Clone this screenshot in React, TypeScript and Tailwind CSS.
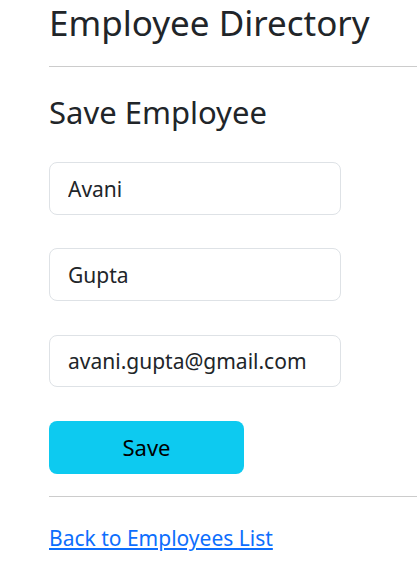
export default function App() {
  return (
    <div className="min-h-[586px] bg-white pl-[49px] font-['Noto_Sans','Open_Sans',sans-serif] text-[#212529]">
      <h1 className="h-[48px] text-[35px] leading-[46px] font-normal">Employee Directory</h1>
      <hr className="mt-[18px] border-0 border-t border-[#cccccc]" />
      <h2 className="mt-[23px] h-[44px] text-[31px] leading-[44px] font-normal">Save Employee</h2>
      <form className="mt-[28px] flex flex-col gap-y-[33px]" onSubmit={(e) => e.preventDefault()}>
        <input
          className="h-[53px] w-[292px] rounded-[8px] border border-[#dee2e6] px-[18px] font-['Noto_Sans',sans-serif] text-[21px] text-[#212529] outline-none"
          defaultValue="Avani"
        />
        <input
          className="h-[53px] w-[292px] rounded-[8px] border border-[#dee2e6] px-[18px] font-['Noto_Sans',sans-serif] text-[21px] text-[#212529] outline-none"
          defaultValue="Gupta"
        />
        <input
          className="mt-[1px] h-[52px] w-[292px] rounded-[8px] border border-[#dee2e6] px-[18px] font-['Noto_Sans',sans-serif] text-[21px] text-[#212529] outline-none"
          defaultValue="avani.gupta@gmail.com"
        />
        <button
          type="submit"
          className="mt-[1px] h-[53px] w-[195px] rounded-[8px] bg-[#0dcaf0] font-['Noto_Sans',sans-serif] text-[22px] text-black"
        >
          Save
        </button>
      </form>
      <hr className="mt-[22px] border-0 border-t border-[#cccccc]" />
      <a href="#" className="mt-[26px] block w-fit text-[21px] leading-[30px] text-[#0d6efd] underline">
        Back to Employees List
      </a>
    </div>
  );
}
